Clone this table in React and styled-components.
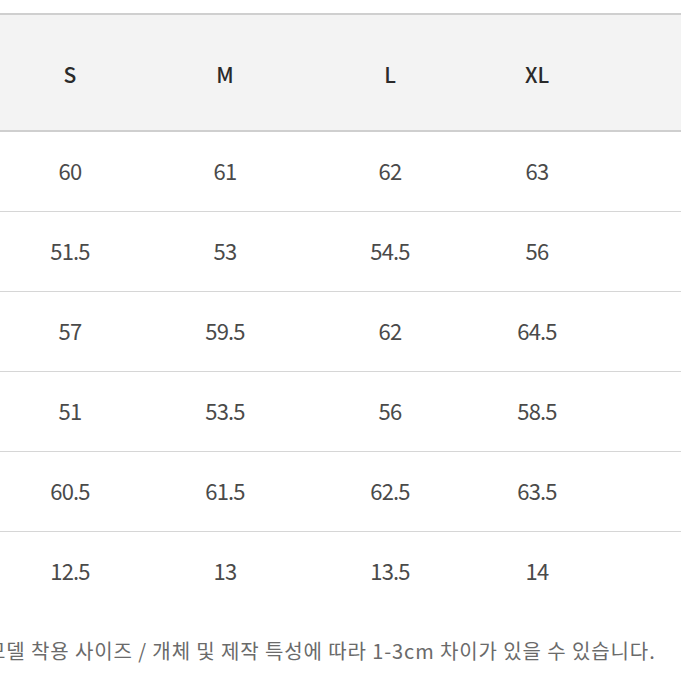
import React from "react";
import styled, { createGlobalStyle } from "styled-components";

// 사이즈 표 데이터
const sizes = ["S", "M", "L", "XL"];
const rows = [
  ["60", "61", "62", "63"],
  ["51.5", "53", "54.5", "56"],
  ["57", "59.5", "62", "64.5"],
  ["51", "53.5", "56", "58.5"],
  ["60.5", "61.5", "62.5", "63.5"],
  ["12.5", "13", "13.5", "14"],
];

const GlobalStyle = createGlobalStyle`
  html, body {
    margin: 0;
    padding: 0;
    background: #ffffff;
    overflow: hidden;
  }
  body {
    font-family: "Noto Sans CJK KR", "Noto Sans", sans-serif;
  }
`;

function App() {
  return (
    <>
      <GlobalStyle />
      <Page>
        <Table>
          <HeadRow>
            {sizes.map((s) => (
              <HeadCell key={s}>{s}</HeadCell>
            ))}
            <HeadCell />
          </HeadRow>
          {rows.map((r, i) => (
            <Row key={i} $last={i === rows.length - 1}>
              {r.map((v, j) => (
                <Cell key={j}>{v}</Cell>
              ))}
              <Cell />
            </Row>
          ))}
        </Table>
        <Note>모델 착용 사이즈 / 개체 및 제작 특성에 따라 1-3cm 차이가 있을 수 있습니다.</Note>
      </Page>
    </>
  );
}

export default App;

// 전체 페이지
const Page = styled.div`
  width: 681px;
  height: 681px;
  padding-top: 13px;
  box-sizing: border-box;
  overflow: hidden;
`;

const Table = styled.div`
  display: flex;
  flex-direction: column;
`;

// 컬럼 폭 (왼쪽 라벨 열이 잘린 형태)
const columns = "140px 170px 160px 134px 1fr";

const HeadRow = styled.div`
  display: grid;
  grid-template-columns: ${columns};
  height: 115px;
  background: #f3f3f3;
  border-top: 2px solid #cfcfcf;
  border-bottom: 2px solid #cfcfcf;
`;

const HeadCell = styled.div`
  display: flex;
  align-items: center;
  justify-content: center;
  font-size: 21px;
  font-weight: 500;
  color: #2a2a2a;
  padding-top: 2px;
`;

const Row = styled.div`
  display: grid;
  grid-template-columns: ${columns};
  height: 79px;
  border-bottom: ${(p) => (p.$last ? "none" : "1px solid #d6d6d6")};
`;

const Cell = styled.div`
  display: flex;
  align-items: center;
  justify-content: center;
  font-size: 22px;
  color: #4a4a4a;
  letter-spacing: -0.8px;
  padding-bottom: 3px;
`;

// 하단 안내 문구
const Note = styled.p`
  margin: 25px 0 0;
  padding: 0;
  text-indent: -13px;
  white-space: nowrap;
  font-size: 20px;
  color: #6a6a6a;
  letter-spacing: 0.9px;
`;
